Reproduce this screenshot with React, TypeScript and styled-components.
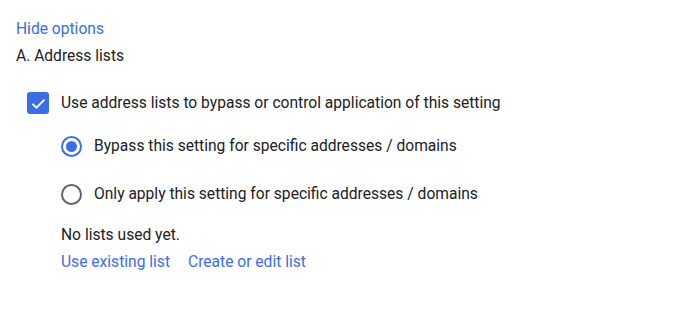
import React, { useState } from 'react';
import styled, { createGlobalStyle } from 'styled-components';

const GlobalStyle = createGlobalStyle`
  html, body {
    margin: 0;
    padding: 0;
    background: #ffffff;
  }
  body {
    font-family: Roboto, "Liberation Sans", Arial, sans-serif;
    color: #202124;
  }
`;

const Page = styled.div`
  padding: 17px 16px 16px;
  font-size: 15.6px;
  line-height: 24px;
`;

const LinkButton = styled.a`
  color: #3b6ee4;
  text-decoration: none;
  cursor: pointer;
  font-size: 15.6px;
  line-height: 24px;

  &:hover {
    text-decoration: underline;
  }
`;

const SectionTitle = styled.div`
  margin-top: 3px;
  color: #202124;
`;

const CheckRow = styled.label`
  display: flex;
  align-items: center;
  gap: 12px;
  margin-top: 24px;
  padding-left: 11px;
  height: 22px;
  cursor: pointer;
`;

const Box = styled.span<{ checked: boolean }>`
  width: 22px;
  height: 22px;
  box-sizing: border-box;
  border-radius: 3px;
  display: flex;
  align-items: center;
  justify-content: center;
  flex-shrink: 0;
  background: ${p => (p.checked ? '#3b6ee4' : 'transparent')};
  border: ${p => (p.checked ? 'none' : '2px solid #5f6368')};
`;

const Options = styled.div`
  padding-left: 45px;
  margin-top: 20px;
  display: flex;
  flex-direction: column;
  gap: 24px;
`;

const RadioRow = styled.label`
  display: flex;
  align-items: center;
  gap: 12px;
  height: 24px;
  cursor: pointer;
`;

const RadioCircle = styled.span<{ checked: boolean }>`
  width: 21px;
  height: 21px;
  box-sizing: border-box;
  border-radius: 50%;
  border: 2px solid ${p => (p.checked ? '#3b6ee4' : '#5f6368')};
  display: flex;
  align-items: center;
  justify-content: center;
  flex-shrink: 0;

  &::after {
    content: '';
    width: 11px;
    height: 11px;
    border-radius: 50%;
    background: #3b6ee4;
    display: ${p => (p.checked ? 'block' : 'none')};
  }
`;

const ListInfo = styled.div`
  padding-left: 45px;
  margin-top: 17px;
`;

const LinkRow = styled.div`
  display: flex;
  gap: 18px;
  margin-top: 3px;
`;

const modes = [
  { id: 'bypass', label: 'Bypass this setting for specific addresses / domains' },
  { id: 'only', label: 'Only apply this setting for specific addresses / domains' },
];

export default function App() {
  const [useLists, setUseLists] = useState(true);
  const [mode, setMode] = useState('bypass');

  return (
    <>
      <GlobalStyle />
      <Page>
        <LinkButton>Hide options</LinkButton>
        <SectionTitle>A. Address lists</SectionTitle>

        <CheckRow onClick={() => setUseLists(!useLists)}>
          <Box checked={useLists}>
            {useLists && (
              <svg width="17" height="17" viewBox="0 0 24 24">
                <path d="M3.5 12.5l5.5 5.5L20.5 6.5" fill="none" stroke="#fff" strokeWidth="2.6" />
              </svg>
            )}
          </Box>
          Use address lists to bypass or control application of this setting
        </CheckRow>

        <Options>
          {modes.map(m => (
            <RadioRow key={m.id} onClick={() => setMode(m.id)}>
              <RadioCircle checked={mode === m.id} />
              {m.label}
            </RadioRow>
          ))}
        </Options>

        <ListInfo>
          No lists used yet.
          <LinkRow>
            <LinkButton>Use existing list</LinkButton>
            <LinkButton>Create or edit list</LinkButton>
          </LinkRow>
        </ListInfo>
      </Page>
    </>
  );
}
